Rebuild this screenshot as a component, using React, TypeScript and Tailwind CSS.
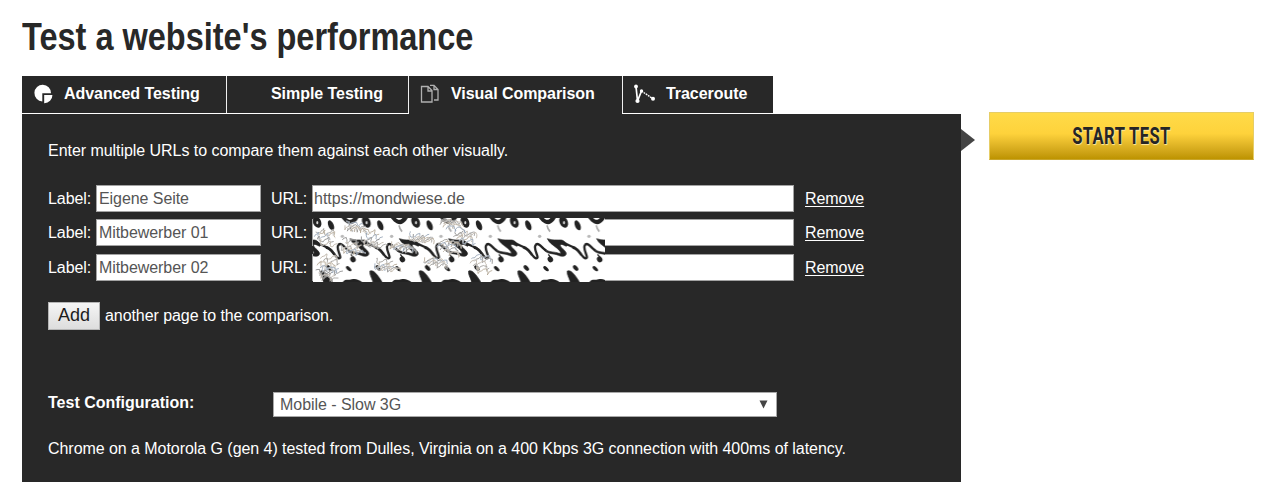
import { ReactNode } from "react";

const rows = [
  { label: "Eigene Seite", url: "https://mondwiese.de", gap: "mb-[7px]" },
  { label: "Mitbewerber 01", url: "", gap: "mb-[8px]" },
  { label: "Mitbewerber 02", url: "", gap: "" },
];

function Field({ className, children }: { className: string; children?: ReactNode }) {
  return (
    <div className={`h-[27px] shrink-0 border border-[#a3a3a3] bg-white leading-[25px] text-[#555555] ${className}`}>
      {children}
    </div>
  );
}

/* A deterministic loose contour line starting at (x, y) */
function squiggle(x: number, y: number, seed: number) {
  let d = `M${x} ${y}`;
  for (let i = 1; i < 10; i++) {
    const a = seed * 1.7 + i * 1.3;
    const dx = 6 + Math.sin(a) * 8;
    const dy = Math.cos(a * 1.1) * 11 + 1;
    d += ` q${(dx * 0.2).toFixed(1)} ${(dy * 0.9).toFixed(1)} ${dx.toFixed(1)} ${dy.toFixed(1)}`;
  }
  return d;
}

const clusters = [
  [8, 42], [150, 42], [292, 40], [425, 42],
  [22, 122], [190, 122], [335, 118], [475, 122],
  [88, 66], [236, 70], [376, 74], [12, 142], [100, 8], [385, 6],
];
const offsets = [[0, 0], [9, 8], [-4, 14], [5, 22], [14, 28]];
const inks = ["#8f8c88", "#a89b86", "#8797ab", "#777777", "#b3a99b"];

function MarbledPatch() {
  return (
    <svg className="absolute left-[313px] top-[218px]" width="292" height="64" viewBox="0 0 876 192">
      <defs>
        <pattern id="marble" width="148" height="192" patternUnits="userSpaceOnUse" patternTransform="translate(104 0)">
          <rect width="148" height="192" fill="#fff" />
          {[-148, 0, 148].map((x) => (
            <g key={x} transform={`translate(${x} -9)`} fill="#222">
              <path d="M-22 4 C-8 25 7 32 18 25 C28 18 31 12 35 4 L19 4 C14 16 4 20 -8 4Z" />
              <path d="M6 31 Q8 42 15 50" stroke="#aaa" strokeWidth="5" fill="none" />
              <ellipse cx="56" cy="21" rx="12" ry="18" transform="rotate(-25 56 21)" />
              <ellipse cx="57" cy="23" rx="3" ry="5" fill="#ddd" />
              <ellipse cx="98" cy="31" rx="8" ry="16" transform="rotate(-23 98 31)" />
              <circle cx="132" cy="64" r="5" fill="#b9b9b9" />
              <path d="M7 71 C22 76 36 75 49 75 C59 76 58 84 68 89 L64 94 C54 89 49 86 45 90 C47 99 59 104 63 113 C67 123 52 127 40 121 C25 114 11 119 -1 107 L2 104 C15 113 27 109 42 115 C53 118 44 105 30 95 C22 88 14 85 7 71Z" stroke="#222" strokeWidth="2" />
              <path d="M53 80 C65 90 76 92 88 98 C106 107 110 128 121 130 C135 131 113 105 119 92 C126 78 139 98 151 107" fill="none" stroke="#222" strokeWidth="7" />
              <path d="M82 92 C98 96 111 112 114 124 L105 121 C100 111 91 103 82 101Z" />
              <ellipse cx="16" cy="133" rx="8" ry="9" transform="rotate(-30 16 133)" />
              <path d="M10 118 L18 129" stroke="#222" strokeWidth="4" />
              <ellipse cx="92" cy="159" rx="6" ry="10" transform="rotate(-42 92 159)" />
              <ellipse cx="3" cy="161" rx="5" ry="10" transform="rotate(-48 3 161)" />
              <path d="M67 168 C77 164 87 177 94 187 C101 197 104 200 103 207 L76 207 C77 193 64 180 67 168Z" stroke="#222" strokeWidth="2" />
              <path d="M-16 203 C-8 190 2 197 12 193 C25 189 35 195 46 203Z" />
            </g>
          ))}
        </pattern>
      </defs>
      <rect width="876" height="192" fill="url(#marble)" />
      <g fill="none">
        {clusters.map(([x, y], i) =>
          offsets.map(([dx, dy], j) => {
            const d = squiggle(x + dx, y + dy, i + j * 0.35);
            return (
              <g key={`${i}-${j}`}>
                <path d={d} stroke="#fff" strokeWidth="5" opacity="0.55" />
                <path d={d} stroke={inks[(i + j) % 5]} strokeWidth="2.2" />
              </g>
            );
          }),
        )}
      </g>
    </svg>
  );
}

function PieIcon() {
  return (
    <svg width="20" height="20" viewBox="0 0 20 20" fill="#fff">
      <path d="M9.3 17.4A8.3 8.3 0 1 1 18 9.2H9.3Z" />
      <path d="M11.2 11H19.4A8 8 0 0 1 11.2 19.2Z" />
    </svg>
  );
}

function PagesIcon() {
  return (
    <svg width="20" height="20" viewBox="0 0 20 20" fill="none" stroke="#b0b0b0" strokeWidth="1.3">
      <path d="M1.5 2.5H8L12 6.5V18H1.5ZM8 2.5V7H12" />
      <path d="M10 1.3H14L18 5.5V16H14M14 1.3V5.5H18" />
    </svg>
  );
}

function RouteIcon() {
  return (
    <svg width="24" height="22" viewBox="0 0 24 22" fill="#fff" stroke="#fff">
      <path d="M3 3.5L4.5 18L8.5 8" fill="none" strokeWidth="1.7" />
      <path d="M8.5 8L20 15.8" fill="none" strokeWidth="1.4" strokeDasharray="1.8 0.8" />
      <g stroke="none">
        <circle cx="3" cy="3.5" r="1.9" />
        <circle cx="4.5" cy="18" r="2.1" />
        <circle cx="8.5" cy="8" r="1.7" />
        <circle cx="20" cy="15.8" r="2" />
      </g>
    </svg>
  );
}

export default function App() {
  return (
    <div className="relative h-[482px] w-[1284px] overflow-hidden bg-white pl-[22px] font-['Liberation_Sans',sans-serif] text-[16px] text-white">
      <h1 className="h-[76px] origin-left scale-x-[0.855] whitespace-nowrap pt-[15px] text-[38px] font-bold leading-[44px] text-[#282828]">
        Test a website's performance
      </h1>
      <div className="flex items-start">
        <main className="w-[939px]">
          <nav className="flex h-[38px] font-bold leading-[35px] tracking-[-0.05px]">
            <div className="flex h-[37px] w-[205px] border-r border-[#f0f0f0] bg-[#282828] pl-[11px]">
              <span className="mt-[8px] w-[31px]"><PieIcon /></span>Advanced Testing
            </div>
            <div className="h-[37px] w-[182px] border-r border-[#f0f0f0] bg-[#282828] pl-[44px]">Simple Testing</div>
            <div className="flex h-[38px] w-[213px] bg-[#282828] pl-[11px]">
              <span className="mt-[8px] w-[31px]"><PagesIcon /></span>Visual Comparison
            </div>
            <div className="flex h-[37px] w-[151px] border-l border-[#f0f0f0] bg-[#282828] pl-[10px]">
              <span className="mt-[7px] w-[33px]"><RouteIcon /></span>Traceroute
            </div>
          </nav>
          <section className="h-[368px] bg-[#282828] pl-[26px] pt-[28px]">
            <p className="mb-[25px] h-[18px] leading-[18px] tracking-[-0.046px]">Enter multiple URLs to compare them against each other visually.</p>
            {rows.map((row) => (
              <div key={row.label} className={`flex h-[27px] leading-[27px] tracking-[-0.07px] ${row.gap}`}>
                <span className="w-[48px]">Label:</span>
                <Field className="w-[165px] pl-[2px]">{row.label}</Field>
                <span className="w-[51px] pl-[10px]">URL:</span>
                <Field className="w-[482px] pl-px tracking-[-0.02px]">{row.url}</Field>
                <a className="ml-[11px] underline underline-offset-2">Remove</a>
              </div>
            ))}
            <div className="mt-[20px] flex h-[29px] items-center tracking-[-0.07px]">
              <button className="mr-[5px] h-[28px] w-[52px] border border-[#b5b5b5] bg-gradient-to-b from-[#f5f5f5] to-[#dddddd] text-[18px] leading-[25px] tracking-normal text-[#1c1c1c]">Add</button>
              another page to the comparison.
            </div>
            <div className="mt-[62px] flex h-[25px]">
              <strong className="w-[225px] leading-[21px]">Test Configuration:</strong>
              <div className="flex w-[504px] justify-between border border-[#a8a8a8] bg-white pl-[6px] pr-[8px] leading-[23px] tracking-[-0.05px] text-[#555555]">
                Mobile - Slow 3G
                <svg className="mt-[7px]" width="9" height="9" viewBox="0 0 9 9" fill="#444"><path d="M0.5 0.5H8.5L4.5 8.5Z" /></svg>
              </div>
            </div>
            <p className="mt-[23px] leading-[18px] tracking-[-0.05px]">
              Chrome on a Motorola G (gen 4) tested from Dulles, Virginia on a 400 Kbps 3G connection with 400ms of latency.
            </p>
          </section>
        </main>
        <svg className="mt-[53px]" width="14" height="22" viewBox="0 0 14 22"><path d="M0 0L14 11L0 22Z" fill="#444" /></svg>
        <button className="ml-[14px] mt-[36px] flex h-[48px] w-[265px] items-center justify-center border border-[#e6cd66] border-b-[#c9a62c] bg-gradient-to-b from-[#ffdb48] via-[#fed23b] via-45% to-[#bd9300] font-['Roboto',sans-serif] text-[24px] font-bold text-[#252525]">
          <span className="scale-x-[0.69] whitespace-nowrap tracking-[0.6px] [text-shadow:1px_1px_1px_#ffe9a0]">START TEST</span>
        </button>
      </div>
      <MarbledPatch />
    </div>
  );
}
